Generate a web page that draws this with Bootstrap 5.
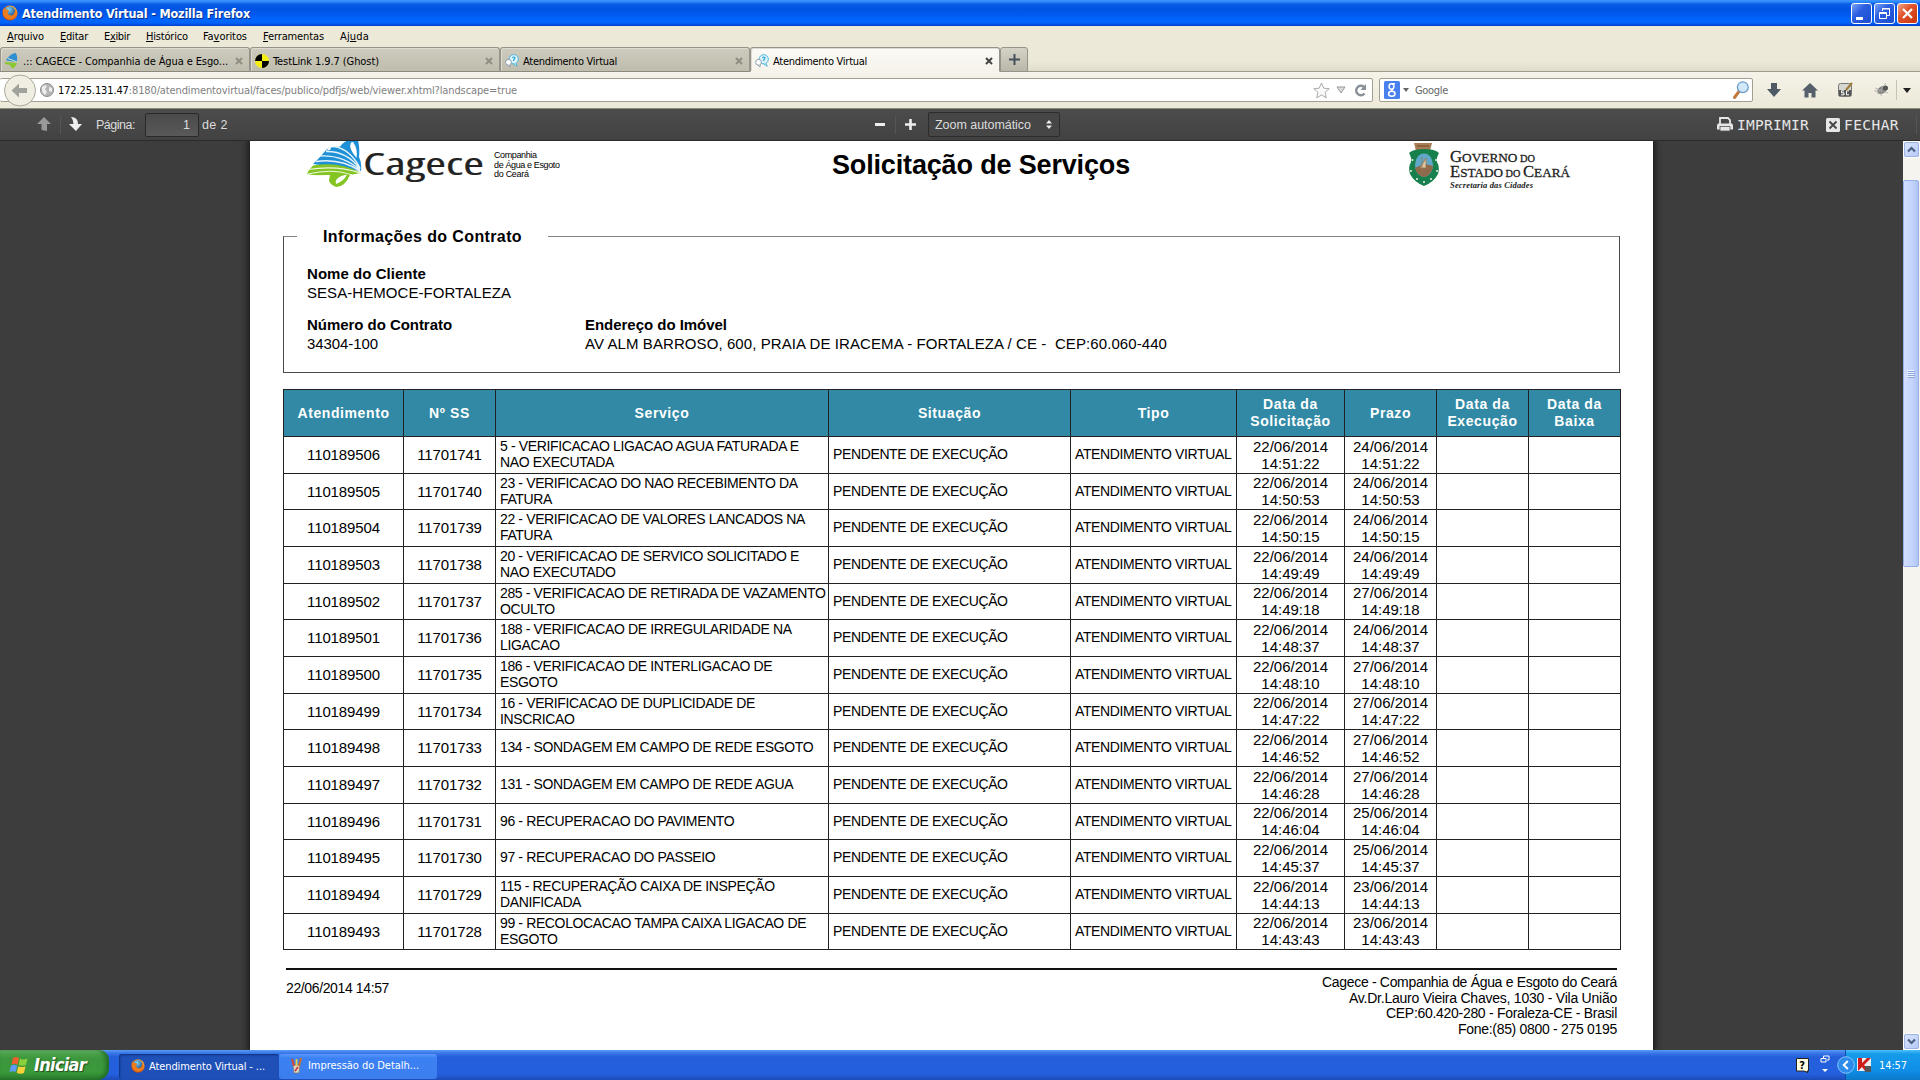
<!DOCTYPE html>
<html lang="pt-br">
<head>
<meta charset="utf-8">
<title>Atendimento Virtual</title>
<link href="https://cdn.jsdelivr.net/npm/bootstrap@5.3.0/dist/css/bootstrap.min.css" rel="stylesheet">
<style>
body{width:1920px;height:1080px;overflow:hidden;font-family:"DejaVu Sans Condensed","DejaVu Sans",sans-serif;font-stretch:condensed;font-size:11px;line-height:14px;color:#000;background:#3d3d3d}
svg{display:block;flex:none}
[data-w]{display:inline-block;white-space:nowrap}
.titlebar{height:26px;padding:0 2px 0 2px;background:linear-gradient(#3d95ff 0,#2a86fa 2px,#0a5ce6 4px,#0054e3 9px,#0058ee 14px,#0066ff 20px,#0062f8 23px,#003dd0 26px)}
.titlebar b{font-size:12.5px;color:#fff;margin-left:4px;padding-top:1px;text-shadow:1px 1px 0 #0a2e86}
.winbtn{width:21px;height:21px;border:1px solid #fff;border-radius:3px;background:linear-gradient(135deg,#7ba2f5,#2c5fe0 40%,#1c4bd0);margin-left:2px}
.winbtn.shut{background:linear-gradient(135deg,#f0a48a,#e2542b 40%,#c8340e)}
.menubar{height:21px;background:#ece9d8;padding-left:7px}
.menubar span{margin-right:var(--g,16px)}
.tabstrip{height:25px;background:linear-gradient(#ece9d8 60%,#dfdccb);border-bottom:1px solid #9c9a89}
.tab{width:250px;height:25px;border:1px solid #96948a;border-bottom-color:#8c8a7c;border-radius:3px 3px 0 0;background:linear-gradient(#cdcbbd,#bfbdae);padding:3px 6px 0 4px;box-shadow:inset 1px 1px 0 #dddbd0}
.tab.on{background:linear-gradient(#fbfaf6,#f5f3ea);border-bottom-color:#f5f3ea}
.tab [data-w]{padding-top:1px}
.newtab{width:28px;height:25px;border:1px solid #96948a;border-radius:3px 3px 0 0;background:linear-gradient(#d5d3c6,#b9b7a9)}
.navtool{height:37px;background:linear-gradient(#f5f3ea,#ece9d8);border-bottom:1px solid #8c8b80}
.field{height:24px;background:#fff;border:1px solid #a19f91;border-radius:2px}
.field [data-w]{padding-top:1px}
.urlbox{width:1373px;border-left:0;padding:0 5px 0 40px}
.backbtn{left:3px;top:2px;z-index:2}
.searchbox{width:374px;margin-left:6px;padding:0 3px 0 4px}
.pdfbar{height:32px;background:linear-gradient(#4c4c4c,#424242);color:#dcdcdc;font-family:"Liberation Sans",Arial,sans-serif;font-size:12.5px;border-bottom:1px solid #2b2b2b}
.vsep{width:1px;height:18px;background:#2a2a2a;border-right:1px solid #555}
.pginput{width:54px;height:24px;border:1px solid #2a2a2a;border-radius:2px;background:linear-gradient(#4a4a4a,#595959);padding-right:8px}
.zoomsel{width:132px;height:25px;border:1px solid #2c2c2c;border-radius:2px;background:#464646;padding:0 7px 0 6px}
.act{font-family:"DejaVu Sans Mono",monospace;font-size:14.5px;color:#e6e6e6}
.viewer{height:909px;padding-left:250px;background:#3d3d3d}
.sheet{width:1403px;height:909px;background:#fff;box-shadow:0 0 7px 2px rgba(0,0,0,.65);font-family:"Liberation Sans",Arial,sans-serif;padding:0 33px;overflow:hidden}
.sheethead{height:95px}
.sheethead h1{font-size:27px;line-height:30px;font-weight:bold;margin:9px 0 0 272px}
.contract{height:137px;border:1px solid #4a4a4a;border-top-color:#858585;padding:27px 0 0 23px;font-size:15px;line-height:19px}
.contract legend{float:none;position:absolute;top:-11px;left:13px;width:251px;background:#fff;padding:0 0 0 26px;margin:0;font-size:16px;line-height:22px;font-weight:bold}
.col-a{width:278px}
.svc{width:1337px;margin:16px 0 0 0;table-layout:fixed;border-collapse:collapse;font-size:15px;color:#000}
.svc th,.svc td{border:1px solid #222;padding:0;text-align:center;vertical-align:middle}
.svc th{background:#3189a5;color:#fff;font-size:14px;line-height:17px;height:47px;letter-spacing:.6px}
.svc td{height:37px;line-height:17px;padding-bottom:1px}
.svc tr:nth-child(3n+2) td{height:36px}
.svc td.up{font-size:14px;line-height:16px;text-align:left;padding:0 0 2px 4px;letter-spacing:-.37px;white-space:nowrap}
.svc .num{letter-spacing:-.12px}
.foot{margin:18px 3px 0 3px;border-top:2px solid #111;font-size:14px;line-height:15.6px}
.scroller{width:17px;background:#f5f4ee}
.sbtn{width:17px;height:17px;border:1px solid #fff;border-radius:3px;background:linear-gradient(135deg,#dbe5ff,#b4c8f6);outline:1px solid #9db3e4;outline-offset:-2px}
.thumb{width:16px;height:387px;margin-top:22px;border:1px solid #98b0e8;border-radius:2px;background:linear-gradient(90deg,#d4dfff,#c3d3fd 60%,#b0c4f5)}
.taskbar{height:30px;color:#fff;background:linear-gradient(#5a9bf5 0,#3a78e8 3px,#245edb 7px,#2460de 24px,#1c4bb8)}
.startbtn{width:109px;height:30px;border-radius:0 10px 12px 0;background:linear-gradient(#7cc47c 0,#48a148 4px,#3c963c 9px,#3a9a3a 22px,#2a7a2c);padding-left:9px;box-shadow:inset -3px 0 4px #1f6a25}
.startbtn b{font-size:18px;font-style:italic;line-height:22px;text-shadow:1px 1px 1px #1d4c1d;margin-left:5px}
.task{width:160px;height:25px;border-radius:3px;padding-left:12px;background:linear-gradient(#5a97fb,#3c81f3 4px,#3b7eee);margin-top:2px}
.task.on{background:#1e50b7;box-shadow:inset 1px 1px 2px #10307c}
.tray{width:75px;background:linear-gradient(#4cc0fa 0,#169bea 4px,#0f8fe9 20px,#0d78ca);border-left:1px solid #0f4f9f}
</style>
</head>
<body class="d-flex flex-column">
<svg width="0" height="0" class="position-absolute">
<defs>
<radialGradient id="fxo" cx=".6" cy=".3" r=".8"><stop offset="0" stop-color="#ffd24a"/><stop offset=".55" stop-color="#f07d1a"/><stop offset="1" stop-color="#b8320c"/></radialGradient>
<radialGradient id="fxb" cx=".4" cy=".3" r=".8"><stop offset="0" stop-color="#7fd4f8"/><stop offset="1" stop-color="#14407f"/></radialGradient>
<symbol id="fox" viewBox="0 0 16 16"><circle cx="8" cy="8" r="7.600" fill="url(#fxo)"/><circle cx="7.800" cy="6.600" r="5.400" fill="url(#fxb)"/><path d="M1 3.500 3.600 4.600Q6 4.300 7 5.800L5.600 7.300Q6 10.500 9.500 10.500 12.600 10 13.200 4.500 15.500 8.500 12.500 12.500 8 16.500 3 12.500 0 9 1 3.500Z" fill="#ec7c1c"/></symbol>
<symbol id="chat" viewBox="0 0 16 16"><circle cx="10" cy="6" r="5.300" fill="#d9f1fa" stroke="#43b0d8"/><path d="M12.500 10.500 14 14 9.500 11.300" fill="#d9f1fa" stroke="#43b0d8"/><circle cx="4" cy="9.500" r="3.300" fill="#fff" stroke="#8294a6"/><path d="M3.500 12.500 5.500 15 6 12" fill="#fff" stroke="#8294a6"/><path d="M8.500 4.500Q10 2.500 11.300 4.200 11.500 5.500 10 6.500V8" fill="none" stroke="#2d9fd0" stroke-width="1.300"/></symbol>
<symbol id="cross" viewBox="0 0 8 8"><path d="M1 1 7 7M7 1 1 7" stroke="currentColor" stroke-width="2"/></symbol>
</defs></svg>

<header class="titlebar d-flex align-items-center">
<svg width="16" height="16"><use href="#fox"/></svg>
<b data-w="228">Atendimento Virtual - Mozilla Firefox</b>
<div class="d-flex ms-auto">
<span class="winbtn"><svg width="19" height="19"><rect x="4" y="13" width="7" height="3" fill="#fff"/></svg></span>
<span class="winbtn"><svg width="19" height="19" fill="none" stroke="#fff"><path d="M7.500 7V4.500H14.500V11.500H12M7 5H15"/><path d="M4.500 8.500H11.500V14.500H4.500ZM4 9.500H12"/></svg></span>
<span class="winbtn shut"><svg width="19" height="19"><path d="M5 5 14 14M14 5 5 14" stroke="#fff" stroke-width="2.200"/></svg></span>
</div>
</header>

<nav class="menubar d-flex align-items-center">
<span data-w="37"><u>A</u>rquivo</span><span data-w="28"><u>E</u>ditar</span><span data-w="26">E<u>x</u>ibir</span><span data-w="42" style="--g:15px"><u>H</u>istórico</span><span data-w="44">Fa<u>v</u>oritos</span><span data-w="61"><u>F</u>erramentas</span><span data-w="29">Aj<u>u</u>da</span>
</nav>

<div class="tabstrip d-flex">
<div class="tab d-flex align-items-center"><svg width="14" height="16" viewBox="0 0 14 16"><path d="M2 6Q6 0 11 0 13 4 12 9L1 7.500Z" fill="#2d8fd0"/><path d="M0 9 12 10Q10 15 7 15.500L5 12 0 11Z" fill="#8ac832"/><path d="M3 5.500 12 9" stroke="#d5e6d0"/></svg><span class="ms-1" data-w="205">.:: CAGECE - Companhia de Água e Esgo...</span><svg class="ms-auto" width="8" height="8" color="#908e82"><use href="#cross"/></svg></div>
<div class="tab d-flex align-items-center"><svg width="14" height="14" viewBox="0 0 14 14"><circle cx="7" cy="7" r="7" fill="#f5ee12"/><path d="M7 0V7H0A7 7 0 0 1 7 0ZM7 14V7H14A7 7 0 0 1 7 14Z" fill="#000"/></svg><span class="ms-1" data-w="106">TestLink 1.9.7 (Ghost)</span><svg class="ms-auto" width="8" height="8" color="#908e82"><use href="#cross"/></svg></div>
<div class="tab d-flex align-items-center"><svg width="14" height="16"><use href="#chat"/></svg><span class="ms-1" data-w="94">Atendimento Virtual</span><svg class="ms-auto" width="8" height="8" color="#908e82"><use href="#cross"/></svg></div>
<div class="tab on d-flex align-items-center"><svg width="14" height="16"><use href="#chat"/></svg><span class="ms-1" data-w="94">Atendimento Virtual</span><svg class="ms-auto" width="8" height="8" color="#444"><use href="#cross"/></svg></div>
<div class="newtab d-flex align-items-center justify-content-center"><svg width="11" height="11"><path d="M5.500 0V11M0 5.500H11" stroke="#474f5c" stroke-width="2"/></svg></div>
</div>

<div class="navtool d-flex align-items-center position-relative">
<svg class="backbtn position-absolute" width="34" height="34"><circle cx="17" cy="16.500" r="15.500" fill="#f0eee3" stroke="#a9a89b"/><path d="M8.500 16.500 16 9.500V14H24V19H16V23.500Z" fill="#a2a29c"/></svg>
<div class="field urlbox d-flex align-items-center">
<svg width="14" height="14" viewBox="0 0 14 14"><circle cx="7" cy="7" r="6.500" fill="#b5b5b5" stroke="#8d8d8d"/><path d="M2 4Q5 1 7 3L5 6 7 9 5 12Q1 9 2 4ZM9 4 12 5 12 9 9 8Z" fill="#eee"/></svg>
<span data-w="459" class="ms-1" style="color:#808080"><span class="text-black">172.25.131.47</span>:8180/atendimentovirtual/faces/publico/pdfjs/web/viewer.xhtml?landscape=true</span>
<svg class="ms-auto" width="17" height="17" viewBox="0 0 17 17"><path d="M8.500 1 10.800 6.200 16.200 6.700 12.100 10.400 13.300 15.800 8.500 13 3.700 15.800 4.900 10.400.8 6.700 6.200 6.200Z" fill="#fafafa" stroke="#a9aaad"/></svg>
<svg width="10" height="8" style="margin:0 8px 0 6px"><path d="M1 1H9L5 7Z" fill="#ddd" stroke="#999"/></svg>
<svg width="13" height="13" viewBox="0 0 13 13"><path d="M10.500 9.500A4.700 4.700 0 1 1 10 3" fill="none" stroke="#8a9097" stroke-width="2.400"/><path d="M12 0V6H6.500Z" fill="#8a9097"/></svg>
</div>
<div class="field searchbox d-flex align-items-center">
<svg width="16" height="18" viewBox="0 0 16 18"><rect width="16" height="18" rx="1.500" fill="#4a80ee"/><g fill="none" stroke="#fff" stroke-width="1.500"><ellipse cx="7.500" cy="5.500" rx="2.400" ry="2.700"/><path d="M8 2.800H11M9 8Q6.500 9.500 8.500 10.200"/><ellipse cx="7.800" cy="12.800" rx="3.200" ry="2.500"/></g></svg>
<svg width="6" height="4" style="margin:0 6px 0 3px"><path d="M0 0H6L3 4Z" fill="#666"/></svg>
<span data-w="33" style="color:#666">Google</span>
<svg class="ms-auto" width="16" height="18" viewBox="0 0 16 18"><path d="M1.500 16.500 6 10.500" stroke="#c17a3c" stroke-width="3" stroke-linecap="round"/><circle cx="9.800" cy="6.200" r="5.400" fill="#cfe9fb" stroke="#6d9cc9" stroke-width="1.300"/></svg>
</div>
<svg width="14" height="16" viewBox="0 0 14 16" style="margin-left:14px"><path d="M4 1H10V7H14L7 15 0 7H4Z" fill="#4e5a66"/></svg>
<svg width="16" height="15" viewBox="0 0 16 15" style="margin-left:21px"><path d="M8 0 16 7.500H13.500V14.500H9.500V10H6.500V14.500H2.500V7.500H0Z" fill="#55606b"/></svg>
<svg width="16" height="16" viewBox="0 0 16 16" style="margin-left:20px"><rect x=".5" y="1.500" width="13" height="13" rx="2" fill="#d6d6d3" stroke="#777"/><rect x="1" y="8" width="12" height="6" fill="#555"/><path d="M6 8.800H3.500V10.800H6V12.800H3M11 8.800H8.500V12.800H11" fill="none" stroke="#fff"/><path d="M8 8 14 1" stroke="#9b7a35" stroke-width="2"/></svg>
<svg width="17" height="16" viewBox="0 0 17 16" style="margin-left:19px"><ellipse cx="9" cy="8" rx="5" ry="3.500" transform="rotate(-30 9 8)" fill="#7b7b79"/><circle cx="12.500" cy="6" r="2.500" fill="#555"/><path d="M2 6 15 11M4 12 13 1M8 14 9 4M1 9H8" stroke="#aaa" stroke-width=".8"/></svg>
<i style="width:1px;height:20px;background:#c5c3b4;margin:0 6px 0 6px"></i>
<svg width="8" height="5"><path d="M0 0H8L4 5Z" fill="#222"/></svg>
</div>

<div class="pdfbar d-flex align-items-center">
<svg width="14" height="15" viewBox="0 0 14 15" style="margin-left:37px"><path d="M7 0 14 7H10V14L4.500 13V7H0Z" fill="#999"/></svg>
<i class="vsep" style="margin:0 7px 0 9px"></i>
<svg width="15" height="15" viewBox="0 0 15 15"><path d="M3 0Q10 0 10 7H14L8 14 1 7H5.500Q5.500 3 3 0Z" fill="#eee"/></svg>
<span data-w="39" style="margin-left:13px">Página:</span>
<div class="pginput d-flex align-items-center justify-content-end" style="margin-left:10px">1</div>
<span data-w="26" style="margin-left:3px">de 2</span>
<svg width="10" height="3" style="margin-left:647px"><rect width="10" height="3" fill="#eee"/></svg>
<i class="vsep" style="margin:0 9px 0 10px"></i>
<svg width="11" height="11"><path d="M5.500 0V11M0 5.500H11" stroke="#eee" stroke-width="2.600"/></svg>
<div class="zoomsel d-flex align-items-center justify-content-between" style="margin-left:12px"><span data-w="96">Zoom automático</span><svg width="6" height="9"><path d="M0 3.500 3 0 6 3.500ZM0 5.500H6L3 9Z" fill="#eee"/></svg></div>
<div class="act d-flex align-items-center ms-auto">
<svg width="16" height="15" viewBox="0 0 16 15"><path d="M3 7V1H11L13 3V7" fill="none" stroke="#e6e6e6" stroke-width="1.800"/><path d="M1 6.500H15L16 8V12.500H0V8Z" fill="#e6e6e6"/><rect x="3" y="9.500" width="10" height="4.500" fill="#e6e6e6" stroke="#555" stroke-width=".8"/></svg>
<span data-w="72" style="margin-left:4px">IMPRIMIR</span>
<svg width="14" height="14" style="margin-left:17px"><rect width="14" height="14" rx="1.500" fill="#e6e6e6"/><path d="M3.500 3.500 10.500 10.500M10.500 3.500 3.500 10.500" stroke="#444" stroke-width="1.800"/></svg>
<span data-w="55" style="margin-left:4px">FECHAR</span>
<i class="vsep" style="margin:0 3px 0 17px"></i>
</div>
</div>

<main class="viewer d-flex justify-content-between overflow-hidden">
<article class="sheet">
<div class="sheethead d-flex">
<svg width="277" height="60" viewBox="283 141 277 60">
<path d="M337 147Q343 139 358 140 360 148 359 157 362 163 361 171L313 164 320 157 327 149Z" fill="#1e90d8"/>
<path d="M337 140 348 140Q342 143 340 147L326 151Z" fill="#fff"/>
<path d="M331 147.500 341 146.500 347 152 330 151Z" fill="#1e90d8"/>
<path d="M334 146.500Q350 149 360 168M326 151.500Q347 151 360 169M320.500 156Q343 155 360 170M316 161.500Q341 158 360 171" fill="none" stroke="#e6f3fb" stroke-width="1.300"/>
<path d="M351 142.500Q348 148 356.500 158 358 149 353 142Z" fill="#fff"/>
<path d="M313 165.500Q340 161 361 173L350 175Q345 187 336 187 328 184 329 178L307 174 309 170Z" fill="#84c423"/>
<path d="M308 169.500Q337 165 360 173M308 174Q333 168 352 175" fill="none" stroke="#f0f8e2" stroke-width="1.200"/>
<path d="M309 175.200 330 175 329 180 306 178Z" fill="#fff"/>
<path d="M336 184Q334 177 347 174.500 344 181 336 184Z" fill="#fff"/>
<text x="363" y="174.500" font-size="31" textLength="121" lengthAdjust="spacingAndGlyphs" fill="#222" stroke="#222" stroke-width=".2" font-family="Open Sans,sans-serif">Cagece</text>
<g font-size="9" fill="#000" font-family="Liberation Sans,sans-serif"><text x="494" y="158" textLength="43">Companhia</text><text x="494" y="167.500" textLength="66">de Água e Esgoto</text><text x="494" y="177" textLength="35">do Ceará</text></g>
</svg>
<h1><span data-w="298">Solicitação de Serviços</span></h1>
<svg class="ms-auto" width="212" height="60" viewBox="1408 141 212 60">
<path d="M1414 143H1432L1430 151H1416Z" fill="#a97d55"/><path d="M1417 146H1429" stroke="#70492c"/><path d="M1409 153Q1413 149 1424 149 1435 149 1439 153 1436 158 1437 162 1440 167 1438 174 1434 182 1424 186 1414 182 1410 174 1408 167 1411 162 1412 158 1409 153Z" fill="#17804d"/><ellipse cx="1424" cy="165" rx="9" ry="11.500" fill="#61a8c8"/><path d="M1415 168Q1424 162 1433 166 1432 175 1424 177 1417 176 1415 168Z" fill="#8f6b4c"/><path d="M1422 157V173M1420 168 1426 158V168Z" fill="#d8c9a4" stroke="#9a7450" stroke-width=".8"/>
<g fill="#e9f3e6"><circle cx="1412.500" cy="160" r="1"/><circle cx="1411" cy="171" r="1"/><circle cx="1436" cy="160" r="1"/><circle cx="1437" cy="171" r="1"/><circle cx="1417" cy="179" r="1"/><circle cx="1431" cy="179" r="1"/><circle cx="1424" cy="182" r="1"/></g>
<g font-family="Liberation Serif,serif" fill="#222" stroke="#222" stroke-width=".3"><text x="1450" y="162" font-size="17" textLength="85" lengthAdjust="spacingAndGlyphs">G<tspan font-size="13.500">OVERNO</tspan><tspan font-size="10.500"> DO</tspan></text><text x="1450" y="177" font-size="17" textLength="120" lengthAdjust="spacingAndGlyphs">E<tspan font-size="13.500">STADO</tspan><tspan font-size="10.500"> DO </tspan>C<tspan font-size="13.500">EARÁ</tspan></text><text x="1450" y="188" font-size="8.500" font-style="italic" font-weight="bold" stroke="none" textLength="83">Secretaria das Cidades</text></g>
</svg>
</div>
<fieldset class="contract position-relative">
<legend><span data-w="199">Informações do Contrato</span></legend>
<div><b data-w="119">Nome do Cliente</b></div>
<div><span data-w="204">SESA-HEMOCE-FORTALEZA</span></div>
<div class="d-flex" style="margin-top:13px">
<div class="col-a"><b data-w="145">Número do Contrato</b><br><span data-w="71">34304-100</span></div>
<div><b data-w="142">Endereço do Imóvel</b><br><span data-w="582">AV ALM BARROSO, 600, PRAIA DE IRACEMA - FORTALEZA / CE -&nbsp; CEP:60.060-440</span></div>
</div>
</fieldset>
<table class="svc">
<colgroup><col style="width:120px"><col style="width:92px"><col style="width:333px"><col style="width:242px"><col style="width:166px"><col style="width:108px"><col style="width:92px"><col style="width:92px"><col style="width:92px"></colgroup>
<thead><tr><th>Atendimento</th><th>Nº SS</th><th>Serviço</th><th>Situação</th><th>Tipo</th><th>Data da<br>Solicitação</th><th>Prazo</th><th>Data da<br>Execução</th><th>Data da<br>Baixa</th></tr></thead>
<tbody id="rows"></tbody>
</table>
<footer class="foot d-flex justify-content-between">
<div style="padding-top:11px"><span data-w="103">22/06/2014 14:57</span></div>
<div class="text-end" style="padding-top:5px"><span data-w="295">Cagece - Companhia de Água e Esgoto do Ceará</span><br><span data-w="268">Av.Dr.Lauro Vieira Chaves, 1030 - Vila União</span><br><span data-w="231">CEP:60.420-280 - Foraleza-CE - Brasil</span><br><span data-w="159">Fone:(85) 0800 - 275 0195</span></div>
</footer>
</article>
<aside class="scroller d-flex flex-column">
<div class="sbtn"><svg width="15" height="15"><path d="M4 9.500 7.500 6 11 9.500" fill="none" stroke="#4d6185" stroke-width="2.200"/></svg></div>
<div class="thumb d-flex align-items-center justify-content-center"><svg width="8" height="8"><path d="M0 .5H7M0 2.500H7M0 4.500H7M0 6.500H7" stroke="#eef3ff"/><path d="M1 1.500H8M1 3.500H8M1 5.500H8M1 7.500H8" stroke="#8ca5df"/></svg></div>
<div class="sbtn mt-auto"><svg width="15" height="15"><path d="M4 5.500 7.500 9 11 5.500" fill="none" stroke="#4d6185" stroke-width="2.200"/></svg></div>
</aside>
</main>

<div class="taskbar d-flex align-items-center">
<div class="startbtn d-flex align-items-center">
<svg width="20" height="19" viewBox="0 0 20 19"><path d="M4 2Q7 0 10 2L8.500 8.500Q5 7 2.500 8.500Z" fill="#f0602c"/><path d="M11 2.500Q14 4.500 18.500 2.500L17 9Q13 10.500 9.500 9Z" fill="#8bd03c"/><path d="M2 9.500Q5 8 8.200 9.500L6.700 16Q4 14.500.5 16Z" fill="#5c9cf5"/><path d="M9.300 10.200Q12.500 12 16.500 10.200L15 17Q11 18.500 7.800 16.700Z" fill="#fbd13a"/></svg>
<b data-w="52">Iniciar</b></div>
<div class="task on d-flex align-items-center" style="margin-left:10px"><svg width="14" height="14" class="me-1"><use href="#fox"/></svg><span data-w="116" style="padding-top:1px">Atendimento Virtual - ...</span></div>
<div class="task d-flex align-items-center" style="width:158px"><svg width="11" height="16" viewBox="0 0 11 16" style="margin-right:6px"><path d="M2 7H9L8 15H3Z" fill="#d8d4c0" stroke="#777" stroke-width=".7"/><path d="M3 8 1 1" stroke="#d9482b" stroke-width="2"/><path d="M5.500 8V1" stroke="#ecd04a" stroke-width="1.800"/><path d="M8 8 10 0" stroke="#c96d2c" stroke-width="2"/><path d="M4 13 7 9" stroke="#c33" stroke-width="1.500"/></svg><span data-w="111">Impressão do Detalh...</span></div>
<svg class="ms-auto" width="13" height="15" viewBox="0 0 13 15"><path d="M.5.500H12.500V13H11L12 14.500 8 13H.5Z" fill="#fffee0" stroke="#222"/><text x="3.200" y="11" font-size="11" font-weight="bold">?</text></svg>
<svg width="10" height="18" viewBox="0 0 10 18" style="margin:0 15px 2px 11px"><path d="M3.500 3V1H9V5H7M1 3.500H6V7H1Z" fill="none" stroke="#fff"/><path d="M2 14H8L5 17Z" fill="#fff"/></svg>
<div class="tray d-flex align-items-center align-self-stretch">
<svg width="18" height="18" viewBox="0 0 18 18" style="margin-left:-9px"><circle cx="9" cy="9" r="8.300" fill="#2d8ceb" stroke="#85c4fb"/><path d="M10.800 5 6.800 9 10.800 13" fill="none" stroke="#fff" stroke-width="2"/></svg>
<svg width="15" height="14" viewBox="0 0 15 14" style="margin-left:2px"><rect width="14" height="13" fill="#eee"/><path d="M1 0H5V5L10 0H14L7 7 13 13H8L5 9 1 13Z" fill="#d11c1c"/><rect x="8" y="8" width="6" height="6" fill="#555"/></svg>
<span data-w="28" style="margin-left:7px;padding-top:1px">14:57</span>
</div>
</div>

<script src="https://cdn.jsdelivr.net/npm/bootstrap@5.3.0/dist/js/bootstrap.bundle.min.js"></script>
<script>
// attendance and order numbers count down; each row: [service, request time, deadline day]
const rows=[
["5 - VERIFICACAO LIGACAO AGUA FATURADA E|NAO EXECUTADA","14:51:22",24],
["23 - VERIFICACAO DO NAO RECEBIMENTO DA|FATURA","14:50:53",24],
["22 - VERIFICACAO DE VALORES LANCADOS NA|FATURA","14:50:15",24],
["20 - VERIFICACAO DE SERVICO SOLICITADO E|NAO EXECUTADO","14:49:49",24],
["285 - VERIFICACAO DE RETIRADA DE VAZAMENTO|OCULTO","14:49:18",27],
["188 - VERIFICACAO DE IRREGULARIDADE NA|LIGACAO","14:48:37",24],
["186 - VERIFICACAO DE INTERLIGACAO DE|ESGOTO","14:48:10",27],
["16 - VERIFICACAO DE DUPLICIDADE DE|INSCRICAO","14:47:22",27],
["134 - SONDAGEM EM CAMPO DE REDE ESGOTO","14:46:52",27],
["131 - SONDAGEM EM CAMPO DE REDE AGUA","14:46:28",27],
["96 - RECUPERACAO DO PAVIMENTO","14:46:04",25],
["97 - RECUPERACAO DO PASSEIO","14:45:37",25],
["115 - RECUPERAÇÃO CAIXA DE INSPEÇÃO|DANIFICADA","14:44:13",23],
["99 - RECOLOCACAO TAMPA CAIXA LIGACAO DE|ESGOTO","14:43:43",23]];
document.getElementById("rows").innerHTML=rows.map(([s,t,d],i)=>`<tr><td class="num">${110189506-i}</td><td class="num">${11701741-i}</td><td class="up">${s.replace("|","<br>")}</td><td class="up">PENDENTE DE EXECUÇÃO</td><td class="up">ATENDIMENTO VIRTUAL</td><td>22/06/2014<br>${t}</td><td>${d}/06/2014<br>${t}</td><td></td><td></td></tr>`).join("");
// spread each label's letters over its nominal width
document.querySelectorAll("[data-w]").forEach(e=>{
  const n=e.textContent.length, w=e.getBoundingClientRect().width;
  e.style.letterSpacing=((+e.dataset.w-w)/n).toFixed(3)+"px";
});
</script>
</body>
</html>
